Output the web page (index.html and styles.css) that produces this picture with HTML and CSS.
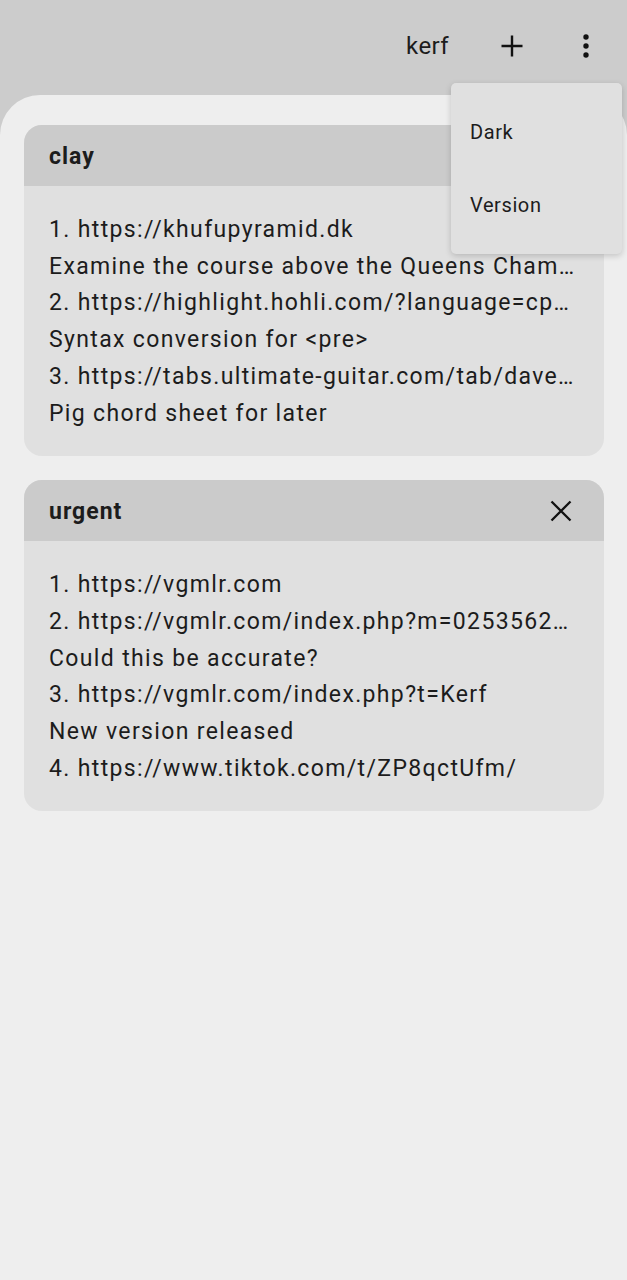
FILE: index.html
```html
<!DOCTYPE html>
<html>
<head>
<meta charset="utf-8">
<link rel="stylesheet" href="styles.css">
</head>
<body>
<div class="app">
  <header class="topbar">
    <span class="title">kerf</span>
    <button class="iconbtn plus" aria-label="Add">
      <svg width="24" height="24" viewBox="0 0 24 24"><path d="M12 1.5v21M1.5 12h21" stroke="#111" stroke-width="2.4" fill="none"/></svg>
    </button>
    <button class="iconbtn kebab" aria-label="More">
      <svg width="8" height="26" viewBox="0 0 8 26"><circle cx="4" cy="4" r="2.7" fill="#111"/><circle cx="4" cy="13" r="2.7" fill="#111"/><circle cx="4" cy="22" r="2.7" fill="#111"/></svg>
    </button>
  </header>
  <main class="content">
    <section class="card">
      <div class="card-head"><h2>clay</h2></div>
      <div class="card-body">
        <p>1. https://khufupyramid.dk</p>
        <p>Examine the course above the Queens Cham…</p>
        <p>2. https://highlight.hohli.com/?language=cp…</p>
        <p>Syntax conversion for &lt;pre&gt;</p>
        <p>3. https://tabs.ultimate-guitar.com/tab/dave…</p>
        <p>Pig chord sheet for later</p>
      </div>
    </section>
    <section class="card">
      <div class="card-head"><h2>urgent</h2>
        <button class="iconbtn close" aria-label="Close">
          <svg width="22" height="22" viewBox="0 0 22 22"><path d="M1.5 1.5l19 19M20.5 1.5l-19 19" stroke="#111" stroke-width="2.3" fill="none"/></svg>
        </button>
      </div>
      <div class="card-body">
        <p>1. https://vgmlr.com</p>
        <p>2. https://vgmlr.com/index.php?m=0253562…</p>
        <p>Could this be accurate?</p>
        <p>3. https://vgmlr.com/index.php?t=Kerf</p>
        <p>New version released</p>
        <p>4. https://www.tiktok.com/t/ZP8qctUfm/</p>
      </div>
    </section>
  </main>
  <div class="menu">
    <div class="menu-item">Dark</div>
    <div class="menu-item">Version</div>
  </div>
</div>
</body>
</html>
```
FILE: styles.css
```css
* { box-sizing: border-box; }
html, body { margin: 0; padding: 0; }
body {
  background: #cccccc;
  font-family: Roboto, "Liberation Sans", sans-serif;
  color: #1c1c1c;
}
.app {
  position: relative;
  width: 627px;
  height: 1280px;
  display: flex;
  flex-direction: column;
}
.topbar {
  height: 95px;
  display: flex;
  align-items: center;
  justify-content: flex-end;
  padding: 0 37px 4px 0;
  flex-shrink: 0;
}
.title {
  font-size: 24px;
  margin-right: 51px;
  letter-spacing: 0.4px;
}
.iconbtn {
  background: none;
  border: 0;
  padding: 0;
  display: flex;
  align-items: center;
  justify-content: center;
}
.plus { margin-right: 58px; }
.kebab { width: 8px; }
.content {
  flex: 1;
  background: #eeeeee;
  border-radius: 40px 40px 0 0;
  padding: 30px 23px 0 24px;
  display: flex;
  flex-direction: column;
  gap: 24px;
}
.card {
  background: #e0e0e0;
  border-radius: 18px;
  overflow: hidden;
}
.card-head {
  background: #cbcbcb;
  height: 61px;
  display: flex;
  align-items: center;
  justify-content: space-between;
  padding: 1px 32px 0 25px;
}
.card-head h2 {
  margin: 0;
  font-size: 23px;
  font-weight: 700;
  letter-spacing: 1px;
}
.card-body {
  padding: 26px 16px 24px 25px;
}
.card-body p {
  margin: 0;
  font-size: 23px;
  line-height: 36.7px;
  letter-spacing: 1.35px;
  white-space: nowrap;
}
.menu {
  position: absolute;
  top: 83px;
  left: 451px;
  width: 171px;
  height: 171px;
  background: #e0e0e0;
  border-radius: 5px;
  box-shadow: 0 2px 6px rgba(0,0,0,0.18);
  padding: 12px 0;
  display: flex;
  flex-direction: column;
}
.menu-item {
  height: 73px;
  display: flex;
  align-items: center;
  padding-left: 19px;
  font-size: 20px;
  letter-spacing: 0.6px;
}
```
